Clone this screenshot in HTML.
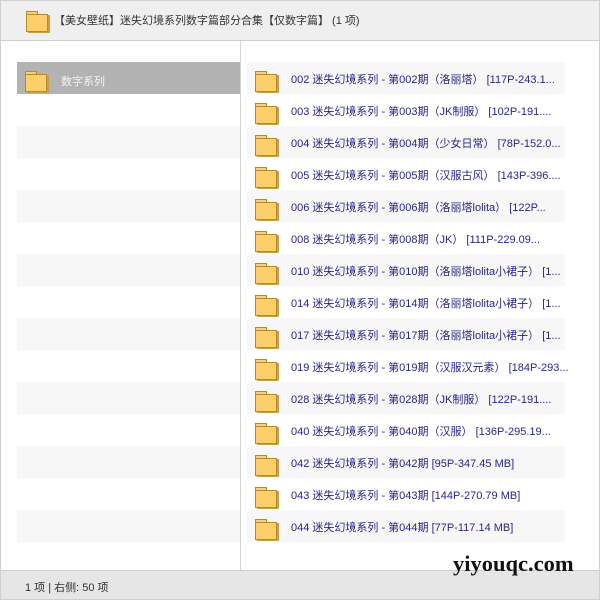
<!DOCTYPE html><html><head><meta charset="utf-8"><style>
*{margin:0;padding:0;box-sizing:border-box}
body{width:600px;height:600px;overflow:hidden;background:#fff;font-family:"Liberation Sans","Noto Sans CJK SC",sans-serif;font-size:11px;position:relative}
.frame{position:absolute;left:0;top:0;width:600px;height:600px;border:1px solid #cfcfcf}
.hdr{position:absolute;left:0;top:0;width:600px;height:41px;background:#efefef;border:1px solid #cfcfcf;border-bottom:1px solid #cfcfcf}
.hdr span{position:absolute;left:53px;top:11px;color:#333;font-size:11px}
.div{position:absolute;left:240px;top:41px;width:1px;height:529px;background:#d4d4d4}
.status{position:absolute;left:0;top:570px;width:600px;height:30px;background:#e6e6e6;border-top:1px solid #cfcfcf}
.status span{position:absolute;left:25px;top:8px;color:#333}
.row{position:absolute;height:32px}
.f{position:absolute;width:22px;height:20px}
.f:before{content:"";position:absolute;left:0;top:0;width:10px;height:4px;background:#fdcf6a;border:1px solid #b38a2d;border-bottom:none}
.f:after{content:"";position:absolute;left:0;top:3px;width:20px;height:16px;background:#fdcf6a;border:1px solid #b38a2d;box-shadow:2px 1px 0 #c9a04a}
.t{position:absolute;left:44px;top:9px;color:#25258f;white-space:nowrap}
.wm{position:absolute;left:453px;top:551px;font-family:"Liberation Serif",serif;font-weight:bold;font-size:22.5px;color:#111}
</style></head><body>
<div class="hdr"><div class="f" style="left:25px;top:10px"></div><span>【美女壁纸】迷失幻境系列数字篇部分合集【仅数字篇】 (1 项)</span></div>
<div class="div"></div>
<div class="row" style="left:17px;top:62px;width:223px;background:#b3b3b3"><div class="f" style="left:8px;top:9px"></div><span class="t" style="color:#f4f4f4;top:11px">数字系列</span></div>
<div class="row" style="left:17px;top:126px;width:223px;background:#f7f7f7"></div>
<div class="row" style="left:17px;top:190px;width:223px;background:#f7f7f7"></div>
<div class="row" style="left:17px;top:254px;width:223px;background:#f7f7f7"></div>
<div class="row" style="left:17px;top:318px;width:223px;background:#f7f7f7"></div>
<div class="row" style="left:17px;top:382px;width:223px;background:#f7f7f7"></div>
<div class="row" style="left:17px;top:446px;width:223px;background:#f7f7f7"></div>
<div class="row" style="left:17px;top:510px;width:223px;background:#f7f7f7"></div>
<div id="r"></div>
<script>
var items=["002 迷失幻境系列 - 第002期（洛丽塔） [117P-243.1...","003 迷失幻境系列 - 第003期（JK制服） [102P-191....","004 迷失幻境系列 - 第004期（少女日常） [78P-152.0...","005 迷失幻境系列 - 第005期（汉服古风） [143P-396....","006 迷失幻境系列 - 第006期（洛丽塔lolita） [122P...","008 迷失幻境系列 - 第008期（JK） [111P-229.09...","010 迷失幻境系列 - 第010期（洛丽塔lolita小裙子） [1...","014 迷失幻境系列 - 第014期（洛丽塔lolita小裙子） [1...","017 迷失幻境系列 - 第017期（洛丽塔lolita小裙子） [1...","019 迷失幻境系列 - 第019期（汉服汉元素） [184P-293...","028 迷失幻境系列 - 第028期（JK制服） [122P-191....","040 迷失幻境系列 - 第040期（汉服） [136P-295.19...","042 迷失幻境系列 - 第042期 [95P-347.45 MB]","043 迷失幻境系列 - 第043期 [144P-270.79 MB]","044 迷失幻境系列 - 第044期 [77P-117.14 MB]"];
var h="";items.forEach(function(s,i){h+='<div class="row" style="left:247px;top:'+(62+i*32)+'px;width:318px;background:'+(i%2?'#fff':'#f7f7f7')+'"><div class="f" style="left:8px;top:9px"></div><span class="t">'+s+'</span></div>';});
document.getElementById("r").innerHTML=h;
</script>
<div class="status"><span>1 项 | 右侧: 50 项</span></div>
<div class="wm">yiyouqc.com</div>
<div class="frame"></div>
</body></html>
